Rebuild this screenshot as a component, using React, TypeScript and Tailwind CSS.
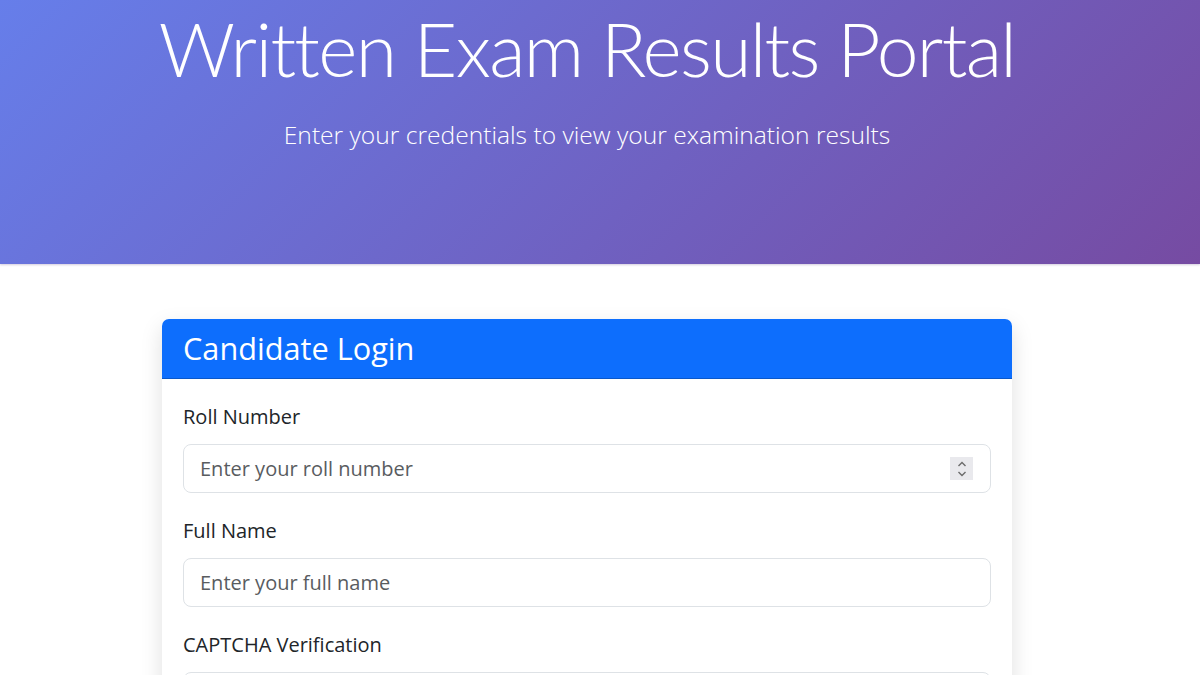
import React from "react";

const FONT = { fontFamily: '"Open Sans", "Noto Sans", sans-serif' };
const TITLE_FONT = { fontFamily: 'Lato, "Open Sans", sans-serif' };

function Field({
  label,
  placeholder,
  spinner,
}: {
  label: string;
  placeholder: string;
  spinner?: boolean;
}) {
  return (
    <div className="mb-[23px]">
      <label className="mb-[12px] block text-[20px] leading-[30px] text-[#212529]">{label}</label>
      <div className="relative">
        <input
          type="text"
          placeholder={placeholder}
          className="block h-[49px] w-full rounded-[8px] border border-[#dee2e6] bg-white px-[16px] text-[20px] text-[#212529] outline-none placeholder:text-[#595c5f]"
        />
        {spinner && (
          <div className="absolute right-[18px] top-[13px] flex h-[23px] w-[23px] flex-col items-center justify-center bg-[#e9e9ed]">
            <svg width="10" height="18" viewBox="0 0 10 18" fill="none" stroke="#6b6b6b" strokeWidth="1.4">
              <path d="M1.5 6 L5 2.5 L8.5 6" />
              <path d="M1.5 12 L5 15.5 L8.5 12" />
            </svg>
          </div>
        )}
      </div>
    </div>
  );
}

export default function App() {
  return (
    <div className="h-[675px] overflow-hidden bg-white" style={FONT}>
      <header className="h-[264px] bg-[linear-gradient(135deg,#667eea_0%,#764ba2_100%)] text-white shadow-[0_1px_2px_rgba(80,50,120,0.25)]">
        <div className="flex w-[1174px] flex-col items-center">
          <h1
            className="whitespace-nowrap text-[75px] font-light leading-[96px] tracking-[-1.7px]"
            style={TITLE_FONT}
          >
            Written Exam Results Portal
          </h1>
          <p className="mt-[21px] text-[24.6px] font-light leading-[36px]">
            Enter your credentials to view your examination results
          </p>
        </div>
      </header>

      <main className="flex w-[1174px] justify-center pt-[55px]">
        <div className="w-[850px] overflow-hidden rounded-[7px] bg-white shadow-[0_8px_22px_rgba(0,0,0,0.13)]">
          <div className="h-[60px] border-b border-[#0a58ca] bg-[#0d6efd] px-[21px] text-[30.7px] leading-[59px] text-white">
            Candidate Login
          </div>
          <div className="px-[21px] pt-[23px]">
            <Field label="Roll Number" placeholder="Enter your roll number" spinner />
            <Field label="Full Name" placeholder="Enter your full name" />
            <Field label="CAPTCHA Verification" placeholder="" />
          </div>
        </div>
      </main>
    </div>
  );
}
